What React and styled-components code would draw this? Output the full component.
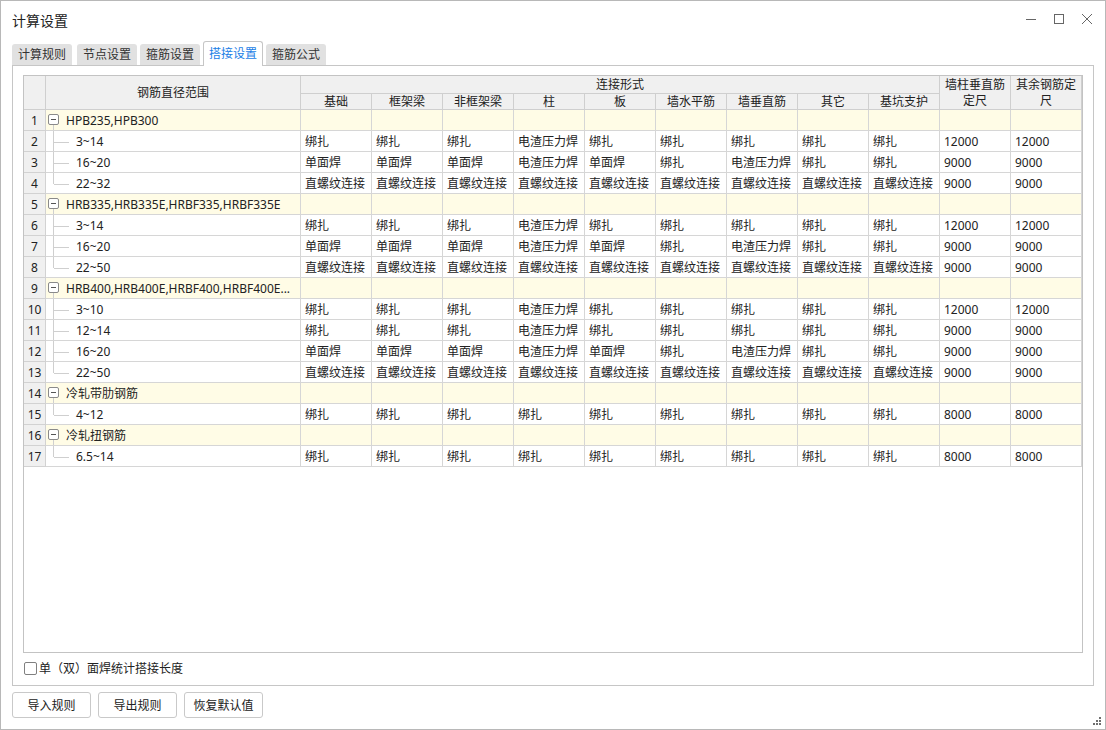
import React from 'react';
import styled, { createGlobalStyle } from 'styled-components';

const GlobalStyle = createGlobalStyle`
    html, body {
        margin: 0;
        padding: 0;
        background: #fff;
    }
    body {
        font-family: "Noto Sans", "Noto Sans CJK SC", sans-serif;
        font-size: 12px;
        color: #222;
    }
`;

const Window = styled.div`
    position: relative;
    width: 1106px;
    height: 730px;
    box-sizing: border-box;
    border: 1px solid #b8b8b8;
    background: #fff;
    display: flex;
    flex-direction: column`;

const TitleBar = styled.div`
    height: 40px;
    display: flex;
    align-items: center;
    justify-content: space-between;
    padding: 0 12px 0 11px`;

const Title = styled.div`
    font-size: 14px;
    color: #222;
    margin-top: -2px`;

const WinControls = styled.div`
    display: flex;
    align-items: center;
    gap: 16px;
    margin-top: -4px;
    svg {
        display: block;
    }`;

const Body = styled.div`
    flex: 1;
    display: flex;
    flex-direction: column;
    padding: 0 11px`;

const TabStrip = styled.div`
    height: 24px;
    display: flex;
    align-items: flex-end;
    gap: 3px;
    position: relative;
    z-index: 1`;

const Tab = styled.div`
    width: 60px;
    box-sizing: border-box;
    text-align: center;
    height: ${p => (p.$active ? '25px' : '21px')};
    line-height: ${p => (p.$active ? '23px' : '21px')};
    margin-bottom: ${p => (p.$active ? '-1px' : '0')};
    margin-right: ${p => (p.$first ? '2px' : '0')};
    background: ${p => (p.$active ? '#fff' : '#e1e1e1')};
    border: ${p => (p.$active ? '1px solid #c6c6c6' : 'none')};
    border-bottom: none;
    border-radius: 3px 3px 0 0;
    color: ${p => (p.$active ? '#1a7ee6' : '#333')}`;

const Panel = styled.div`
    height: 621px;
    box-sizing: border-box;
    border: 1px solid #c6c6c6;
    padding: 9px 10px 0 10px;
    display: flex;
    flex-direction: column`;

const GridBox = styled.div`
    height: 578px;
    box-sizing: border-box;
    border: 1px solid #c3c3c3;
    overflow: hidden`;

const Grid = styled.div`
    display: grid;
    grid-template-columns: 22px 255px repeat(11, 71px);
    grid-template-rows: 18px 16px repeat(17, 21px)`;

const HeadCell = styled.div`
    box-sizing: border-box;
    background: #f0f0f0;
    border-right: 1px solid #cfcfcf;
    border-bottom: 1px solid #cfcfcf;
    display: flex;
    align-items: center;
    justify-content: center;
    text-align: center;
    line-height: 16px;
    padding: 1px 4px 0 4px;
    grid-column: ${p => p.$col};
    grid-row: ${p => p.$row}`;

const NumCell = styled.div`
    box-sizing: border-box;
    background: #f0f0f0;
    border-right: 1px solid #d2d2d2;
    border-bottom: 1px solid #d2d2d2;
    text-align: center;
    padding-top: 1px;
    line-height: 20px;
    overflow: hidden`;

const Cell = styled.div`
    box-sizing: border-box;
    background: ${p => (p.$group ? '#fffce6' : '#fff')};
    border-right: 1px solid #d6d6d6;
    border-bottom: 1px solid #d6d6d6;
    padding-left: 4px;
    padding-top: 1px;
    line-height: 20px;
    white-space: nowrap;
    overflow: hidden`;

const GroupCell = styled(Cell)`
    position: relative;
    padding-left: 20px;
    padding-right: 3px`;

const Toggle = styled.span`
    position: absolute;
    left: 2px;
    top: 4px;
    width: 11px;
    height: 11px;
    box-sizing: border-box;
    border: 1px solid #8a8a8a;
    border-radius: 2px;
    background: #fff;
    &::before {
        content: "";
        position: absolute;
        left: 2px;
        top: 4px;
        width: 5px;
        height: 1px;
        background: #555;
    }
    &::after {
        content: "";
        position: absolute;
        left: 4px;
        top: 10px;
        width: 1px;
        height: 7px;
        background: #cfcfcf;
    }`;

const TreeCell = styled(Cell)`
    position: relative;
    padding-left: 30px;
    &::before {
        content: "";
        position: absolute;
        left: 7px;
        top: -1px;
        width: 1px;
        height: ${p => (p.$last ? '12px' : '22px')};
        background: #cfcfcf;
    }
    &::after {
        content: "";
        position: absolute;
        left: 8px;
        top: 11px;
        width: 15px;
        height: 1px;
        background: #cfcfcf;
    }`;

const CheckRow = styled.label`
    display: flex;
    align-items: center;
    height: 28px;
    margin-top: 1px;
    gap: 2px`;

const CheckBox = styled.span`
    width: 13px;
    height: 13px;
    box-sizing: border-box;
    border: 1px solid #808080;
    border-radius: 2px;
    background: #fff;
    margin-left: 1px`;

const ButtonRow = styled.div`
    display: flex;
    gap: 7px;
    margin-top: 6px`;

const Button = styled.button`
    width: 79px;
    height: 26px;
    box-sizing: border-box;
    border: 1px solid #c9c9c9;
    border-radius: 3px;
    background: #fff;
    font-family: "Noto Sans", "Noto Sans CJK SC", sans-serif;
    font-size: 12px;
    color: #222;
    padding: 0`;

const Grip = styled.svg`
    position: absolute;
    right: 3px;
    bottom: 3px`;

const BZ = '绑扎';
const DM = '单面焊';
const DZ = '电渣压力焊';
const ZL = '直螺纹连接';

const kinds = ['基础', '框架梁', '非框架梁', '柱', '板', '墙水平筋', '墙垂直筋', '其它', '基坑支护'];

const light = (a, b) => [BZ, BZ, BZ, DZ, BZ, BZ, BZ, BZ, BZ, a, b];
const single = [DM, DM, DM, DZ, DM, BZ, DZ, BZ, BZ, '9000', '9000'];
const thread = [ZL, ZL, ZL, ZL, ZL, ZL, ZL, ZL, ZL, '9000', '9000'];
const tie = (v) => [BZ, BZ, BZ, BZ, BZ, BZ, BZ, BZ, BZ, v, v];

const groups = [
    { name: 'HPB235,HPB300', rows: [['3~14', light('12000', '12000')], ['16~20', single], ['22~32', thread]] },
    { name: 'HRB335,HRB335E,HRBF335,HRBF335E', rows: [['3~14', light('12000', '12000')], ['16~20', single], ['22~50', thread]] },
    {
        name: 'HRB400,HRB400E,HRBF400,HRBF400E...',
        rows: [['3~10', light('12000', '12000')], ['12~14', light('9000', '9000')], ['16~20', single], ['22~50', thread]],
    },
    { name: '冷轧带肋钢筋', rows: [['4~12', tie('8000')]] },
    { name: '冷轧扭钢筋', rows: [['6.5~14', tie('8000')]] },
];

function Rows() {
    const out = [];
    let n = 0;
    groups.forEach((g) => {
        n += 1;
        out.push(<NumCell key={'n' + n}>{n}</NumCell>);
        out.push(
            <GroupCell key={'g' + n} $group>
                <Toggle />
                {g.name}
            </GroupCell>
        );
        for (let i = 0; i < 11; i++) out.push(<Cell key={'g' + n + '-' + i} $group />);
        g.rows.forEach((r, ri) => {
            n += 1;
            out.push(<NumCell key={'n' + n}>{n}</NumCell>);
            out.push(
                <TreeCell key={'t' + n} $last={ri === g.rows.length - 1}>
                    {r[0]}
                </TreeCell>
            );
            r[1].forEach((v, i) => out.push(<Cell key={'c' + n + '-' + i}>{v}</Cell>));
        });
    });
    return out;
}

export default function App() {
    return (
        <>
            <GlobalStyle />
            <Window>
                <TitleBar>
                    <Title>计算设置</Title>
                    <WinControls>
                        <svg width="12" height="12" viewBox="0 0 12 12">
                            <path d="M1 6.5h10" stroke="#666" strokeWidth="1" />
                        </svg>
                        <svg width="12" height="12" viewBox="0 0 12 12">
                            <rect x="1.5" y="1.5" width="9" height="9" fill="none" stroke="#666" />
                        </svg>
                        <svg width="12" height="12" viewBox="0 0 12 12">
                            <path d="M1 1l10 10M11 1L1 11" stroke="#666" strokeWidth="1" />
                        </svg>
                    </WinControls>
                </TitleBar>
                <Body>
                    <TabStrip>
                        <Tab $first>计算规则</Tab>
                        <Tab>节点设置</Tab>
                        <Tab>箍筋设置</Tab>
                        <Tab $active>搭接设置</Tab>
                        <Tab>箍筋公式</Tab>
                    </TabStrip>
                    <Panel>
                        <GridBox>
                            <Grid>
                                <HeadCell $col="1" $row="1 / span 2" />
                                <HeadCell $col="2" $row="1 / span 2">钢筋直径范围</HeadCell>
                                <HeadCell $col="3 / span 9" $row="1">连接形式</HeadCell>
                                <HeadCell $col="12" $row="1 / span 2">墙柱垂直筋定尺</HeadCell>
                                <HeadCell $col="13" $row="1 / span 2">其余钢筋定尺</HeadCell>
                                {kinds.map((k, i) => (
                                    <HeadCell key={k} $col={String(i + 3)} $row="2">
                                        {k}
                                    </HeadCell>
                                ))}
                                <Rows />
                            </Grid>
                        </GridBox>
                        <CheckRow>
                            <CheckBox />
                            <span>单（双）面焊统计搭接长度</span>
                        </CheckRow>
                    </Panel>
                    <ButtonRow>
                        <Button>导入规则</Button>
                        <Button>导出规则</Button>
                        <Button>恢复默认值</Button>
                    </ButtonRow>
                </Body>
                <Grip width="9" height="9" viewBox="0 0 9 9">
                    <g fill="#6f6f6f">
                        <rect x="6" y="0" width="2" height="2" />
                        <rect x="3" y="3" width="2" height="2" />
                        <rect x="6" y="3" width="2" height="2" />
                        <rect x="0" y="6" width="2" height="2" />
                        <rect x="3" y="6" width="2" height="2" />
                        <rect x="6" y="6" width="2" height="2" />
                    </g>
                </Grip>
            </Window>
        </>
    );
}
